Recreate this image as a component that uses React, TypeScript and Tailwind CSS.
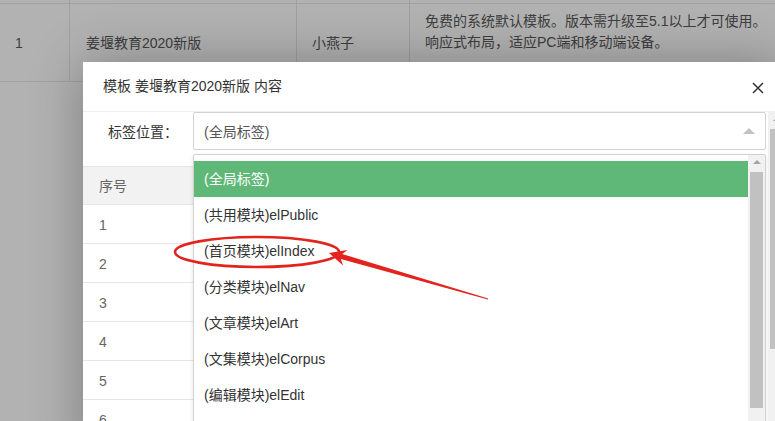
import React from 'react';

const font = { fontFamily: '"Liberation Sans", "Noto Sans CJK SC", sans-serif' };

const options = [
  '(全局标签)',
  '(共用模块)elPublic',
  '(首页模块)elIndex',
  '(分类模块)elNav',
  '(文章模块)elArt',
  '(文集模块)elCorpus',
  '(编辑模块)elEdit',
];

function BackTable() {
  return (
    <div className="w-[800px] text-[14px] text-[#5a5a5a]">
      <div className="grid grid-cols-[70px_227px_113px_1fr] h-[4px] border-b border-[#e6e6e6]">
        <div className="border-r border-[#e6e6e6]" />
        <div className="border-r border-[#e6e6e6]" />
        <div className="border-r border-[#e6e6e6]" />
        <div />
      </div>
      <div className="grid grid-cols-[70px_227px_113px_1fr] h-[78px] border-b border-[#e6e6e6]">
        <div className="border-r border-[#e6e6e6] flex items-center pl-[15px] pt-[1px]">1</div>
        <div className="border-r border-[#e6e6e6] flex items-center pl-[16px] pt-[1px]">姜堰教育2020新版</div>
        <div className="border-r border-[#e6e6e6] flex items-center pl-[15px] pt-[1px]">小燕子</div>
        <div className="pl-[15px] pt-[7px] leading-[21px]">
          <div>免费的系统默认模板。版本需升级至5.1以上才可使用。</div>
          <div>响应式布局，适应PC端和移动端设备。</div>
        </div>
      </div>
    </div>
  );
}

function Scrollbar({ thumbTop, thumbHeight }: { thumbTop: number; thumbHeight: number }) {
  return (
    <div className="relative w-[17px] h-full bg-[#f1f1f1]">
      <div className="absolute left-[5px] top-[5px] w-0 h-0 border-l-[4px] border-r-[4px] border-b-[4px] border-l-transparent border-r-transparent border-b-[#a3a3a3]" />
      <div
        className="absolute left-[2px] w-[13px] bg-[#c1c1c1]"
        style={{ top: thumbTop, height: thumbHeight }}
      />
    </div>
  );
}

function Dialog() {
  return (
    <div className="absolute left-[83px] top-[62px] w-[700px] h-[400px] bg-white shadow-[1px_1px_50px_rgba(0,0,0,0.3)] flex flex-col">
      <div className="h-[50px] shrink-0 border-b border-[#eeeeee] flex items-center justify-between pl-[20px] pr-[19px] text-[14px] text-[#333]">
        <span>模板 姜堰教育2020新版 内容</span>
        <svg width="12" height="12" viewBox="0 0 12 12" className="mt-[2px]">
          <path d="M1 1L11 11M11 1L1 11" stroke="#333" strokeWidth="1.5" />
        </svg>
      </div>
      <div className="flex flex-1 min-h-0">
        <div className="relative w-[684px]">
          <div className="flex h-[38px] mb-[16px]">
            <label className="w-[110px] pr-[15px] text-right leading-[40px] text-[14px] text-[#333]">标签位置：</label>
            <div className="relative w-[573px] h-[38px] border border-[#d2d2d2] rounded-[2px] pl-[10px] leading-[38px] text-[14px] text-[#555]">
              (全局标签)
              <div className="absolute right-[10px] top-[15px] w-0 h-0 border-l-[6px] border-r-[6px] border-b-[6px] border-l-transparent border-r-transparent border-b-[#c2c2c2]" />
            </div>
          </div>
          <div className="w-[683px] text-[14px] text-[#666]">
            <div className="h-[39px] bg-[#f2f2f2] border-y border-[#e6e6e6] flex items-center pl-[16px] pt-[2px]">序号</div>
            {[1, 2, 3, 4, 5, 6].map((n) => (
              <div key={n} className="h-[39px] border-b border-[#e6e6e6] flex items-center pl-[16px] pt-[2px]">
                {n}
              </div>
            ))}
          </div>
          <div className="absolute left-[110px] top-[42px] w-[573px] h-[300px] bg-white border border-[#d2d2d2] rounded-[2px] shadow-[0_2px_4px_rgba(0,0,0,0.12)] flex pt-[6px]">
            <div className="flex-1 text-[14px] text-[#333]">
              {options.map((o, i) => (
                <div
                  key={o}
                  className={
                    i === 0
                      ? 'h-[36px] leading-[37px] px-[10px] bg-[#5fb878] text-white'
                      : 'h-[36px] leading-[37px] px-[10px]'
                  }
                >
                  {o}
                </div>
              ))}
            </div>
            <div className="-mt-[6px] h-[300px]">
              <Scrollbar thumbTop={17} thumbHeight={236} />
            </div>
          </div>
        </div>
        <div className="w-[2px]" />
        <Scrollbar thumbTop={17} thumbHeight={220} />
      </div>
    </div>
  );
}

function Annotation() {
  // arrow from tail (488,299) to tip (329,253)
  const tip = [329, 253];
  const tail = [488, 299];
  const dx = tail[0] - tip[0];
  const dy = tail[1] - tip[1];
  const len = Math.hypot(dx, dy);
  const ux = dx / len;
  const uy = dy / len;
  const px = -uy;
  const py = ux;
  const hb = [tip[0] + ux * 17, tip[1] + uy * 17];
  const nk = [tip[0] + ux * 13, tip[1] + uy * 13];
  const pts = [
    tip,
    [hb[0] + px * 8, hb[1] + py * 8],
    [nk[0] + px * 2.6, nk[1] + py * 2.6],
    [tail[0] + px * 0.4, tail[1] + py * 0.4],
    [tail[0] - px * 0.4, tail[1] - py * 0.4],
    [nk[0] - px * 2.6, nk[1] - py * 2.6],
    [hb[0] - px * 8, hb[1] - py * 8],
  ]
    .map((p) => p.join(','))
    .join(' ');
  return (
    <svg className="absolute inset-0 pointer-events-none" width="775" height="421">
      <ellipse cx="257" cy="252" rx="82" ry="15" fill="none" stroke="#e3231d" strokeWidth="2.6" />
      <polygon points={pts} fill="#e3231d" />
    </svg>
  );
}

export default function App() {
  return (
    <div className="relative w-[775px] h-[421px] overflow-hidden bg-white" style={font}>
      <BackTable />
      <div className="absolute inset-0 bg-black/30" />
      <Dialog />
      <Annotation />
    </div>
  );
}
